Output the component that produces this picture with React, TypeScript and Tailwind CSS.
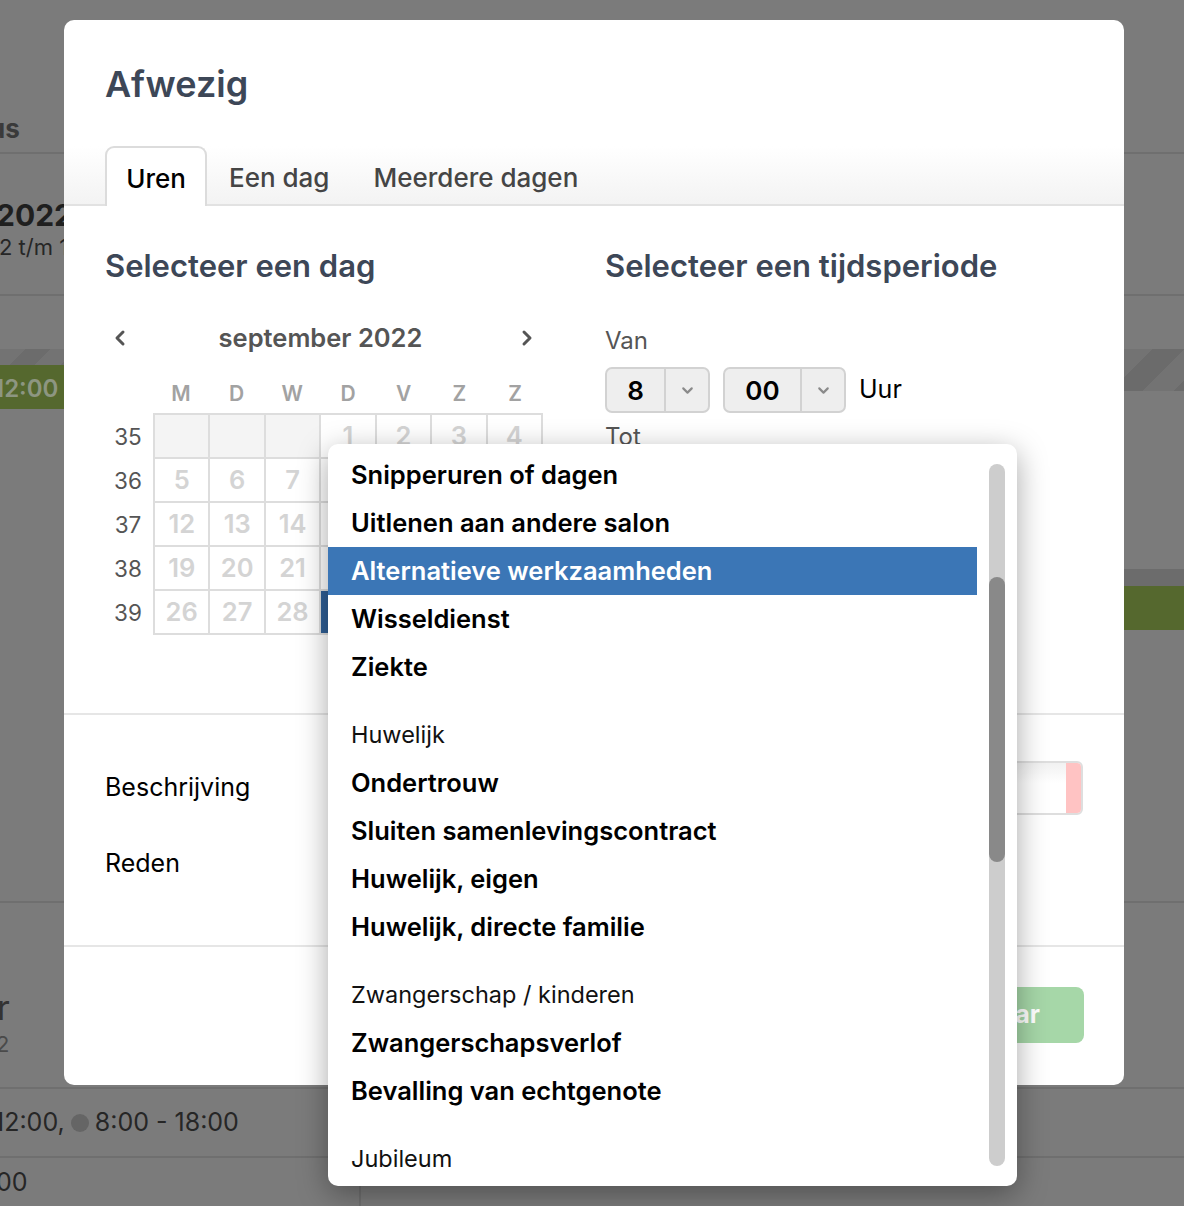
import React from "react";
import { ChevronLeft, ChevronRight, ChevronDown } from "lucide-react";

const weeks: { wk: number; days: (number | null)[] }[] = [
  { wk: 35, days: [null, null, null, 1, 2, 3, 4] },
  { wk: 36, days: [5, 6, 7, 8, 9, 10, 11] },
  { wk: 37, days: [12, 13, 14, 15, 16, 17, 18] },
  { wk: 38, days: [19, 20, 21, 22, 23, 24, 25] },
  { wk: 39, days: [26, 27, 28, 29, 30, null, null] },
];

type Opt = { label: string; group?: boolean; active?: boolean };
const options: Opt[] = [
  { label: "Snipperuren of dagen" },
  { label: "Uitlenen aan andere salon" },
  { label: "Alternatieve werkzaamheden", active: true },
  { label: "Wisseldienst" },
  { label: "Ziekte" },
  { label: "Huwelijk", group: true },
  { label: "Ondertrouw" },
  { label: "Sluiten samenlevingscontract" },
  { label: "Huwelijk, eigen" },
  { label: "Huwelijk, directe familie" },
  { label: "Zwangerschap / kinderen", group: true },
  { label: "Zwangerschapsverlof" },
  { label: "Bevalling van echtgenote" },
  { label: "Jubileum", group: true },
  { label: "12,5 jarig jubileum" },
];

function Background() {
  return (
    <div className="flex flex-col text-[#2a2a2a]">
      <div className="h-[154px] border-b-2 border-[#6f6f6f] flex items-end pb-[8px]">
        <span className="-ml-[11px] text-[26px] leading-[30px] font-bold text-[#3a3a3a]">us</span>
      </div>
      <div className="h-[142px] border-b-2 border-[#6f6f6f] flex flex-col pt-[42px]">
        <span className="-ml-[4px] text-[30px] leading-[38px] font-bold text-[#1f1f1f] whitespace-nowrap">2022</span>
        <span className="-ml-[1px] text-[22px] leading-[26px] text-[#262626] whitespace-nowrap">2 t/m 18</span>
      </div>
      <div className="h-[53px]" />
      <div className="h-[60px] flex">
        <div className="w-[64px] flex flex-col">
          <div className="h-[16px] bg-[repeating-linear-gradient(135deg,#737373_0px,#737373_18px,#6c6c6c_18px,#6c6c6c_36px)]" />
          <div className="h-[44px] bg-[#55682e] flex items-center overflow-hidden pt-[4px]">
            <span className="-ml-[6px] text-[24px] font-semibold text-[#8d9681]">12:00</span>
          </div>
        </div>
        <div className="flex-1 h-[42px] bg-[repeating-linear-gradient(135deg,#737373_0px,#737373_22px,#6b6b6b_22px,#6b6b6b_44px)]" />
      </div>
      <div className="h-[160px]" />
      <div className="ml-[64px] h-[17px] bg-[#6c6c6c]" />
      <div className="ml-[64px] h-[44px] bg-[#55682e]" />
      <div className="h-[273px] border-b-2 border-[#6f6f6f]" />
      <div className="h-[186px] border-b-2 border-[#6f6f6f] flex flex-col pt-[86px]">
        <span className="-ml-[3px] text-[34px] leading-[38px] text-[#333]">r</span>
        <span className="-ml-[4px] text-[22px] leading-[30px] text-[#4a4a4a] mt-[2px]">2</span>
      </div>
      <div className="h-[69px] border-b-2 border-[#6f6f6f] flex items-center">
        <span className="-ml-[6px] text-[25px] text-[#262626] whitespace-nowrap flex items-center">
          12:00,
          <span className="inline-block w-[18px] h-[18px] rounded-full bg-[#656565] mx-[6px]" />
          8:00 - 18:00
        </span>
      </div>
      <div className="h-[60px] flex">
        <div className="w-[361px] border-r-2 border-[#6f6f6f] pt-[6px]">
          <span className="-ml-[4px] text-[25px] text-[#262626]">00</span>
        </div>
      </div>
    </div>
  );
}

function SelectBox({ value, w1, w2 }: { value: string; w1: string; w2: string }) {
  return (
    <div className="flex h-[46px] rounded-[7px] border-2 border-[#d2d2d2] bg-[#eeeeee]">
      <div className={`${w1} flex items-center justify-center text-[26px] font-semibold text-black`}>{value}</div>
      <div className={`${w2} border-l-2 border-[#d2d2d2] flex items-center justify-center`}>
        <ChevronDown size={17} strokeWidth={3} color="#8a8a8a" />
      </div>
    </div>
  );
}

function Modal() {
  return (
    <div className="absolute left-[64px] top-[20px] w-[1060px] h-[1065px] bg-white rounded-[10px] overflow-hidden flex flex-col">
      <div className="pl-[41px] pt-[42px]">
        <h1 className="text-[36px] leading-[44px] font-semibold text-[#3d4757]">Afwezig</h1>
      </div>
      <div className="mt-[40px] h-[60px] border-b-2 border-[#e2e2e2] bg-[linear-gradient(to_bottom,#ffffff,#f3f3f3)] flex items-end pl-[41px]">
        <div className="-mb-[2px] h-[60px] w-[102px] pt-[3px] bg-white border-2 border-b-0 border-[#dcdcdc] rounded-t-[9px] flex items-center justify-center text-[26px] font-medium text-black">
          Uren
        </div>
        <div className="-mb-[2px] h-[60px] pt-[3px] px-[22px] flex items-center text-[26px] font-medium text-[#454545]">Een dag</div>
        <div className="-mb-[2px] h-[60px] pt-[3px] px-[22px] flex items-center text-[26px] font-medium text-[#454545]">Meerdere dagen</div>
      </div>
      <div className="h-[509px] border-b-2 border-[#e6e6e6] flex px-[41px] pt-[41px]">
        <div className="w-[500px]">
          <h2 className="text-[31px] leading-[38px] font-semibold text-[#3d4757]">Selecteer een dag</h2>
          <div className="mt-[38px] w-[437px] h-[30px] flex items-center justify-between">
            <div className="w-[30px] flex justify-center">
              <ChevronLeft size={24} strokeWidth={3} color="#555" />
            </div>
            <span className="text-[25.5px] font-semibold text-[#555] -ml-[6px]">september 2022</span>
            <div className="w-[30px] flex justify-center">
              <ChevronRight size={24} strokeWidth={3} color="#555" />
            </div>
          </div>
          <div className="mt-[25px] ml-[48px] w-[390px] h-[30px] grid grid-cols-7">
            {["M", "D", "W", "D", "V", "Z", "Z"].map((d, i) => (
              <div key={i} className="flex items-center justify-center text-[21px] font-semibold text-[#a2a2a2]">
                {d}
              </div>
            ))}
          </div>
          <div className="mt-[5px] flex">
            <div className="w-[48px] pt-[2px] flex flex-col">
              {weeks.map((w) => (
                <div key={w.wk} className="h-[44px] flex items-center justify-center text-[22.5px] text-[#555] pr-[2px]">
                  {w.wk}
                </div>
              ))}
            </div>
            <div className="w-[390px] grid grid-cols-7 border-t-2 border-l-2 border-[#dddddd]">
              {weeks.flatMap((w) =>
                w.days.map((d, i) => (
                  <div
                    key={`${w.wk}-${i}`}
                    className={`h-[44px] border-r-2 border-b-2 border-[#dddddd] flex items-center justify-center text-[25.5px] font-semibold ${
                      d === null ? "bg-[#f4f4f4]" : d === 29 ? "bg-[#2f5f96] text-white" : "bg-white text-[#d4d4d4]"
                    }`}
                  >
                    {d ?? ""}
                  </div>
                ))
              )}
            </div>
          </div>
        </div>
        <div className="flex-1">
          <h2 className="text-[31px] leading-[38px] font-semibold text-[#3d4757]">Selecteer een tijdsperiode</h2>
          <div className="mt-[42px] text-[24px] leading-[28px] text-[#555]">Van</div>
          <div className="mt-[12px] flex items-center gap-[13px]">
            <SelectBox value="8" w1="w-[57px]" w2="w-[44px]" />
            <SelectBox value="00" w1="w-[75px]" w2="w-[44px]" />
            <span className="text-[25px] text-black">Uur</span>
          </div>
          <div className="mt-[10px] text-[24px] leading-[28px] text-[#555]">Tot</div>
        </div>
      </div>
      <div className="h-[232px] border-b-2 border-[#e6e6e6] flex flex-col px-[41px] pt-[46px] gap-[22px]">
        <div className="h-[54px] flex items-center">
          <span className="w-[500px] text-[25px] text-black">Beschrijving</span>
          <div className="flex-1 h-[54px] flex rounded-[6px] border-2 border-[#dedede] overflow-hidden">
            <div className="flex-1 bg-[linear-gradient(to_bottom,#f1f1f1,#ffffff_40%)]" />
            <div className="w-[15px] bg-[#ffc3c3]" />
          </div>
        </div>
        <div className="h-[54px] flex items-center">
          <span className="text-[25px] text-black">Reden</span>
        </div>
      </div>
      <div className="flex justify-end pr-[40px] pt-[40px]">
        <div className="h-[56px] px-[44px] rounded-[8px] bg-[#a6d7a8] flex items-center text-[25px] font-bold text-white">
          Bewaar
        </div>
      </div>
    </div>
  );
}

function Dropdown() {
  return (
    <div className="absolute left-[328px] top-[444px] w-[689px] h-[742px] bg-white rounded-[10px] overflow-hidden shadow-[0_8px_30px_rgba(0,0,0,0.35)] flex">
      <div className="w-[649px] pt-[7px] flex flex-col">
        {options.map((o, i) => (
          <div
            key={i}
            className={`h-[48px] shrink-0 flex items-center pl-[23px] whitespace-nowrap ${
              o.group ? "mt-[20px] text-[23.5px] font-normal text-[#111]" : "text-[25.5px] font-semibold"
            } ${o.active ? "bg-[#3b76b6] text-white" : o.group ? "" : "text-black"}`}
          >
            {o.label}
          </div>
        ))}
      </div>
      <div className="w-[40px] py-[20px] pl-[12px]">
        <div className="w-[16px] h-full rounded-full bg-[#cdcdcd] flex flex-col">
          <div className="h-[113px] shrink-0" />
          <div className="h-[285px] rounded-full bg-[#898989]" />
        </div>
      </div>
    </div>
  );
}

export default function App() {
  return (
    <div className="relative w-[1184px] h-[1206px] overflow-hidden bg-[#7b7b7b] font-['Inter',sans-serif]">
      <Background />
      <Modal />
      <Dropdown />
    </div>
  );
}
